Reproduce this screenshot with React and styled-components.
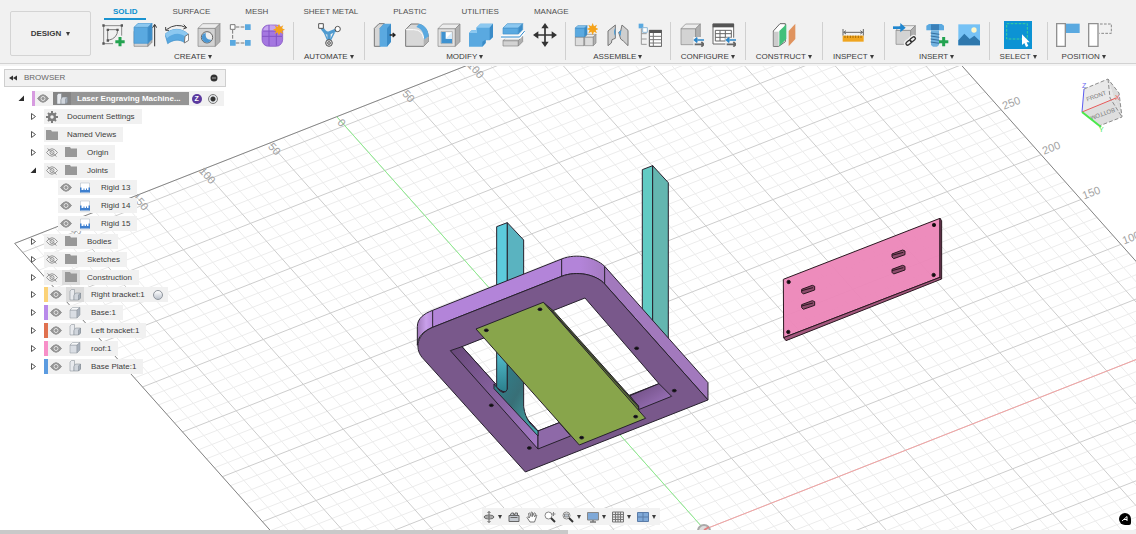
import React, { useState } from "react";
import styled, { createGlobalStyle } from "styled-components";

const GlobalStyle = createGlobalStyle`
    * {
        box-sizing: border-box;
    }
    body {
        margin: 0;
        font-family: "Liberation Sans", Arial, sans-serif;
        font-size: 8px;
        line-height: 10px;
        color: #3c3c3c;
        background: #fff;
    }
    button {
        margin: 0;
        padding: 0;
        border: 0;
        background: none;
        font: inherit;
        color: inherit;
        cursor: pointer;
    }
    ul {
        margin: 0;
        padding: 0;
        list-style: none;
    }
    svg {
        display: block;
        flex: none;
    }
`;

//SECTION STYLED-COMPONENTS

const Page = styled.div`
    height: 100vh;
    display: flex;
    flex-direction: column;
    overflow: hidden;
`;

const Header = styled.header`
    display: flex;
    height: 66px;
    flex: none;
    padding-left: 10px;
    background: #f1f1f1;
    border-bottom: 2px solid #f4f4f4;
    box-shadow: inset 0 -1px 0 #d2d2d2;
`;

const DesignButton = styled.button`
    display: flex;
    align-items: center;
    justify-content: center;
    gap: 5px;
    width: 81px;
    height: 45px;
    margin: 11px 2px 0 0;
    border: 1px solid #d4d4d4;
    border-radius: 2px;
    font-weight: bold;
`;

const Caret = styled.span`
    border-left: 2px solid transparent;
    border-right: 2px solid transparent;
    border-top: 4px solid #3c3c3c;
`;

const Ribbon = styled.div`
    flex: 1;
`;

const Tabs = styled.nav`
    display: flex;
    gap: 17px;
    padding: 7px 0 0 11px;
    height: 20px;
`;

const Tab = styled.button`
    padding: 0 9px;
    height: 13px;
    line-height: 10px;
    display: flex;
    color: ${(props) => (props.$active ? "#0a8fd0" : "#505050")};
    font-weight: ${(props) => (props.$active ? "bold" : "normal")};
    border-bottom: 2px solid ${(props) => (props.$active ? "#1a93d0" : "transparent")};
`;

const Groups = styled.div`
    display: flex;
    padding-top: 2px;
`;

const Group = styled.section`
    display: flex;
    flex-direction: column;
    align-items: center;
    height: 38px;
    border-right: 1px solid #d0d0d0;
    &:last-child {
        border-right: 0;
    }
`;

const Tools = styled.div`
    display: flex;
    flex: none;
    align-items: center;
    gap: 8px;
    padding: 0 8px;
    height: 26px;
`;

const Tool = styled.button`
    display: flex;
    align-items: center;
    justify-content: center;
    width: ${(props) => (props.$active ? 28 : 24)}px;
    height: ${(props) => (props.$active ? 28 : 24)}px;
    background: ${(props) => (props.$active ? "#0c93d4" : "none")};
`;

const GroupLabel = styled.button`
    display: flex;
    align-items: center;
    gap: 2px;
    padding: 4px 10px 0;
    white-space: nowrap;
`;

const Viewport = styled.main`
    position: relative;
    flex: 1;
    min-height: 0;
    overflow: hidden;
    background: #fff;
`;

const Canvas = styled.svg`
    width: 100%;
    height: 100%;
`;

const Browser = styled.aside`
    position: absolute;
    top: 3px;
    left: 4px;
    width: 222px;
`;

const BrowserHead = styled.div`
    display: flex;
    align-items: center;
    gap: 7px;
    height: 18px;
    padding: 0 7px 0 4px;
    background: #f1f1f1;
    border: 1px solid #cfcfcf;
    color: #666;
`;

const BrowserTitle = styled.h2`
    flex: 1;
    margin: 0;
    font-size: 8px;
    font-weight: normal;
`;

const Tree = styled.ul`
    display: grid;
    grid-auto-rows: 1fr;
    height: 288px;
    padding-top: 3px;
`;

const TreeRow = styled.li`
    display: flex;
    align-items: center;
    padding-left: ${(props) => props.$indent}px;
`;

const Toggle = styled.button`
    display: flex;
    justify-content: center;
    width: 8px;
    margin-right: 7px;
`;

const Chip = styled.div`
    display: flex;
    align-items: center;
    height: 15px;
    background: #f1f1f1;
`;

const ColorBar = styled.span`
    width: ${(props) => props.$width}px;
    height: 15px;
    background: ${(props) => props.$color};
`;

const EyeSlot = styled.span`
    display: flex;
    justify-content: center;
    width: 16px;
    margin-right: ${(props) => (props.$last ? 0 : 2)}px;
`;

const IconSlot = styled.span`
    display: flex;
    align-items: center;
    justify-content: center;
    width: 18px;
    height: ${(props) => (props.$root ? 13 : 15)}px;
    background: ${(props) => (props.$root ? "#858585" : props.$shaded ? "#dcdcdc" : "none")};
`;

const NodeName = styled.span`
    padding: 0 7px;
    white-space: nowrap;
    line-height: 13px;
    ${(props) =>
        props.$root &&
        "background: #959595; color: #fff; font-weight: bold; margin-right: 3px; padding: 0 8px 0 6px;"}
`;

const Badge = styled.span`
    display: flex;
    align-items: center;
    justify-content: center;
    width: 10px;
    height: 10px;
    margin-right: 6px;
    border-radius: 50%;
    background: #5b3a9e;
    color: #fff;
    font-size: 7px;
    font-weight: bold;
`;

const Activate = styled.input`
    appearance: none;
    width: 10px;
    height: 10px;
    margin: 0 6px 0 0;
    border: 1px solid #7c7c7c;
    border-radius: 50%;
    background: radial-gradient(circle, #333 0 2px, #e4e7ea 3px);
`;

const Ball = styled.span`
    width: 10px;
    height: 10px;
    margin: 0 5px 0 1px;
    border: 1px solid #8e949c;
    border-radius: 50%;
    background: linear-gradient(#fff, #bcc3cd);
`;

const NavDock = styled.div`
    position: absolute;
    left: 6px;
    right: 0;
    bottom: 5px;
    display: flex;
    justify-content: center;
    pointer-events: none;
`;

const NavBar = styled.div`
    display: flex;
    align-items: center;
    gap: 6px;
    height: 17px;
    padding: 0 4px 0 1px;
    background: #f2f2f2;
    pointer-events: auto;
`;

const NavButton = styled.button`
    display: flex;
    align-items: center;
    gap: 3px;
`;

const AssistButton = styled.button`
    position: absolute;
    right: 5px;
    bottom: 5px;
    width: 12px;
    height: 12px;
    border-radius: 6px 6px 2px 6px;
    background: #000;
`;

const ScrollTrack = styled.div`
    flex: none;
    height: 4px;
    background: #f1f1f1;
`;

const ScrollThumb = styled.div`
    width: 50%;
    height: 4px;
    background: #c9c9c9;
`;

//!SECTION

//SECTION TOOL ICONS (72 x 72 grid)

const EDGE = "#858585";
const GREY = "#d3d3d3";
const BLUE = "#5aa9e0";
const SKY = "#8cc8f0";

const Star = ({ x, y }) => (
    <path
        transform={`translate(${x} ${y})`}
        d="M0-18 4-8 13-13 9-4 18 0 9 4 13 13 4 8 0 18-4 8-13 13-9 4-18 0-9-4-13-13-4-8Z"
        fill="#f5a31a"
    />
);

const Plus = ({ x, y }) => (
    <path d={`M${x - 14} ${y}h28M${x} ${y - 14}v28`} stroke="#23a350" strokeWidth="9" />
);

const Swap = () => (
    <g strokeWidth="5" fill="none">
        <path d="M72 51H44m8-7-8 7 8 7" stroke="#2b86c9" />
        <path d="M44 64h28m-8-7 8 7-8 7" stroke="#666" />
    </g>
);

const Box = ({ x, y, w, h, d, front = GREY, top = "#ececec", side = "#b0b0b0", edge = EDGE }) => (
    <g stroke={edge} strokeWidth="2" strokeLinejoin="round">
        <path d={`M${x} ${y + d}h${w}v${h}h${-w}z`} fill={front} />
        <path d={`M${x} ${y + d}l${d} ${-d}h${w}l${-d} ${d}z`} fill={top} />
        <path d={`M${x + w} ${y + d}l${d} ${-d}v${h}l${-d} ${d}z`} fill={side} />
    </g>
);

const icons = {
    sketch: (
        <>
            <path d="M8 8h54v30M8 8v54h28" fill="none" stroke="#8a8a8a" strokeWidth="3" />
            <path d="M20 52V22M20 20h30Q50 46 22 52" fill="none" stroke="#7a7a7a" strokeWidth="3" />
            <path d="M4 4h7v7H4zM59 4h7v7h-7zM4 58h7v7H4zM17 17h7v7h-7zM46 17h7v7h-7zM17 49h7v7h-7z" fill="#555" />
            <Plus x={57} y={56} />
        </>
    ),
    extrude: (
        <>
            <Box x={3} y={14} w={42} h={44} d={12} />
            <Box x={3} y={1} w={42} h={48} d={12} front={BLUE} top={SKY} side="#3b8cc8" edge="#4795cd" />
            <path d="M65 70V6m-6 8 6-10 6 10" fill="none" stroke="#333" strokeWidth="3" />
        </>
    ),
    revolve: (
        <>
            <path d="M0 34C18 16 48 12 70 34L58 58C42 48 24 50 8 62Z" fill={BLUE} stroke="#3f8fc9" strokeWidth="2" />
            <path d="M0 34C18 16 48 12 70 34L60 40C44 28 22 30 6 46Z" fill={SKY} />
            <path d="M60 40 71 33V52L58 60Z" fill="#fff" stroke="#777" strokeWidth="3" />
            <path d="M4 20Q34-2 64 14M2 12v10h10M56 5l9 9-10 4" fill="none" stroke="#444" strokeWidth="3" />
        </>
    ),
    hole: (
        <>
            <Box x={3} y={2} w={52} h={54} d={14} />
            <circle cx="30" cy="43" r="17" fill="#eee" stroke="#666" strokeWidth="3" />
            <path d="M18 34a15 15 0 1 0 25 16Q24 52 26 29Z" fill="#4c97d2" />
        </>
    ),
    pattern: (
        <>
            <path d="M20 12h28M11 21v30M20 60h28" stroke="#777" strokeWidth="3" strokeDasharray="11 4" />
            <path d="M4 5h14v14H4z" fill="#fff" stroke="#777" strokeWidth="3" />
            <path d="M48 4h17v17H48zM3 51h17v17H3zM48 51h17v17H48z" fill={BLUE} />
        </>
    ),
    form: (
        <>
            <rect x="3" y="6" width="62" height="64" rx="20" fill="#a477e0" stroke="#7e4fc0" strokeWidth="2" />
            <path d="M6 24Q10 8 28 7L52 8 44 24Z" fill="#c6a6f0" />
            <path d="M3 40h60M24 6v63M46 20v48M6 24h40l16-8" fill="none" stroke="#8253c5" strokeWidth="3" />
            <Star x={54} y={20} />
        </>
    ),
    automate: (
        <>
            <path d="M13 12Q26 34 36 30T60 20M36 28v28" fill="none" stroke="#4f9bd0" strokeWidth="10" />
            <path d="M20 24 34 56M52 28 38 56" stroke="#4f9bd0" strokeWidth="4" />
            <path d="M5 2h14v14H5z" fill="#fff" stroke="#555" strokeWidth="3" />
            <circle cx="62" cy="18" r="8" fill="#fff" stroke="#555" strokeWidth="3" />
            <circle cx="36" cy="60" r="10" fill="#ddd" stroke="#555" strokeWidth="3" />
            <circle cx="36" cy="60" r="4" fill="#fff" stroke="#555" strokeWidth="3" />
        </>
    ),
    press: (
        <>
            <path d="M4 16 18 2H34L22 16V70H4Z" fill="#d6d6d6" stroke="#777" strokeWidth="3" />
            <path d="M20 16 32 2H54V56L42 71H20Z" fill={BLUE} />
            <path d="M42 16 54 2V56L42 71Z" fill="#3b8cc8" />
            <path d="M50 36h16m-7-6 7 6-7 6" fill="none" stroke="#222" strokeWidth="4" />
        </>
    ),
    fillet: (
        <>
            <path d="M2 70V20L18 3H40C62 8 71 26 71 54L56 70Z" fill="#d8d8d8" stroke="#777" strokeWidth="3" />
            <path d="M56 70V50L71 40V54Z" fill="#b2b2b2" />
            <path d="M34 12 42 2C62 6 71 24 71 40L57 50C57 30 50 17 34 12Z" fill={BLUE} />
            <path d="M3 20H26Q52 20 56 46" fill="none" stroke="#fff" strokeWidth="3" />
        </>
    ),
    shell: (
        <>
            <Box x={3} y={3} w={52} h={53} d={14} front="#e2e2e2" />
            <path d="M12 26h34v36H12z" fill="#fff" stroke="#999" strokeWidth="2" />
            <path d="M13 27h13v20h19v14H13z" fill="#3f92d0" />
            <path d="M26 47h19V28z" fill="#d9edfb" />
        </>
    ),
    combine: (
        <>
            <path d="M0 30 8 22H22V14L34 2H72V42L62 52H50V60L40 71H0Z" fill={BLUE} />
            <path d="M0 30 8 22H22V14L34 2H72L62 14H24V30Z" fill={SKY} />
            <path d="M62 14 72 2V42L62 52ZM40 56 50 50V60L40 71Z" fill="#3b8cc8" />
        </>
    ),
    split: (
        <>
            <Box x={6} y={2} w={46} h={18} d={13} front={BLUE} top={SKY} side="#3b8cc8" edge="#4795cd" />
            <Box x={6} y={40} w={46} h={16} d={13} top="#d8d8d8" />
            <path d="M0 42H56L71 24" fill="none" stroke="#fff" strokeWidth="10" />
            <path d="M0 42H56L71 24" fill="none" stroke="#2b86c9" strokeWidth="3" />
        </>
    ),
    move: (
        <>
            <path d="M36 10V62M10 36H62" stroke="#333" strokeWidth="5" />
            <path d="M36 0 47 16H25ZM36 72 47 56H25ZM0 36 16 25V47ZM72 36 56 25V47Z" fill="#333" />
        </>
    ),
    component: (
        <>
            <Box x={4} y={34} w={26} h={26} d={8} front="#ddd" />
            <Box x={32} y={34} w={26} h={26} d={8} front="#ddd" />
            <Box x={4} y={8} w={28} h={26} d={7} front={BLUE} top={SKY} side="#3b8cc8" edge="#3f8fc9" />
            <Star x={56} y={18} />
        </>
    ),
    joint: (
        <>
            <path d="M6 24 28 6V46L18 50 16 60 6 68Z" fill="#cfcfcf" stroke="#777" strokeWidth="3" />
            <path d="M66 22 48 6 44 24 38 28 44 48 52 54 66 68Z" fill="#cfcfcf" stroke="#777" strokeWidth="3" />
            <path d="M28 14Q20 28 28 40ZM46 20 38 28 44 40Z" fill="#4c9dd6" />
        </>
    ),
    bom: (
        <>
            <path d="M2 2h14v14H2z" fill={BLUE} />
            <path d="M10 16v48h16M10 32h16M10 48h16" fill="none" stroke="#999" strokeWidth="3" />
            <path d="M14 14h14v14H14z" fill="#fff" stroke="#8fb8d6" strokeWidth="3" />
            <path d="M34 22h37v48H34z" fill="#fff" stroke="#555" strokeWidth="3" />
            <path d="M34 21h37v9H34z" fill="#555" />
            <path d="M34 40h37M34 50h37M34 60h37M46 30v40" stroke="#777" strokeWidth="3" />
        </>
    ),
    configBox: (
        <>
            <Box x={3} y={3} w={44} h={48} d={14} />
            <path d="M40 42h32v30H40z" fill="#f1f1f1" />
            <Swap />
        </>
    ),
    configTable: (
        <>
            <path d="M3 3h62v60H3z" fill="#fff" stroke="#666" strokeWidth="3" />
            <path d="M2 2h64v11H2z" fill="#555" />
            <path d="M10 22h48v32H10zM10 32h48M10 43h48M24 22v32M40 22v32" fill="none" stroke="#666" strokeWidth="3" />
            <path d="M40 44h32v28H40z" fill="#f1f1f1" />
            <Swap />
        </>
    ),
    construct: (
        <>
            <path d="M4 24 24 2H40V56L20 70H4Z" fill="#fff" stroke="#666" strokeWidth="3" />
            <path d="M5 26H20V69H5Z" fill="#ccc" />
            <path d="M22 24 43 4V48L22 70Z" fill="#43c07a" />
            <path d="M50 24 70 2V48L50 70Z" fill="#e0935e" />
        </>
    ),
    measure: (
        <>
            <path d="M6 18V38M67 18V38M8 28H65M15 23 8 28 15 33M58 23 65 28 58 33" fill="none" stroke="#666" strokeWidth="3" />
            <path d="M5 38H68V56H5Z" fill="#f0a51f" />
            <path d="M12 38v7M20 38v7M28 38v7M36 38v7M44 38v7M52 38v7M60 38v7" stroke="#a96d06" strokeWidth="3" />
        </>
    ),
    derive: (
        <>
            <Box x={9} y={8} w={44} h={42} d={14} />
            <path d="M0 14H28" stroke="#1f86cf" strokeWidth="8" />
            <path d="M22 0 38 14 22 28Z" fill="#1f86cf" />
            <g fill="none" stroke="#f1f1f1" strokeWidth="12">
                <rect x="38" y="54" width="18" height="10" rx="5" transform="rotate(-38 47 59)" />
                <rect x="50" y="44" width="18" height="10" rx="5" transform="rotate(-38 59 49)" />
            </g>
            <g fill="none" stroke="#333" strokeWidth="4">
                <rect x="38" y="54" width="18" height="10" rx="5" transform="rotate(-38 47 59)" />
                <rect x="50" y="44" width="18" height="10" rx="5" transform="rotate(-38 59 49)" />
            </g>
        </>
    ),
    fastener: (
        <>
            <path d="M4 8 12 3H50L57 8V22H4Z" fill={BLUE} />
            <path d="M18 4h24v17H18z" fill="#3b80b8" />
            <path d="M18 22H42V66L36 71H24L18 66Z" fill="#72b2df" />
            <path d="M17 30l26 4M17 39l26 4M17 48l26 4M17 57l26 4" stroke="#356f9f" strokeWidth="3" />
            <Plus x={56} y={56} />
        </>
    ),
    image: (
        <>
            <path d="M4 4H69V67H4Z" fill="#76c2f5" />
            <path d="M4 52 22 32 38 48 52 38 69 54V67H4Z" fill="#2f78ad" />
            <circle cx="51" cy="21" r="8" fill="#fff6c8" />
        </>
    ),
    select: (
        <>
            <path d="M2 2H64V48H2Z" fill="none" stroke="#39d09b" strokeWidth="3" strokeDasharray="8 4" />
            <path d="M48 34V66L55 60 60 72 67 69 62 58H71Z" fill="#fff" />
        </>
    ),
    capture: (
        <>
            <path d="M30 2H71V30H30Z" fill={BLUE} />
            <path d="M2 2H28V70H2Z" fill="#fff" stroke="#909090" strokeWidth="4" />
        </>
    ),
    revert: (
        <>
            <path d="M36 3H70V31H34" fill="none" stroke="#888" strokeWidth="3" strokeDasharray="8 4" />
            <path d="M2 2H30V70H2Z" fill="#fff" stroke="#909090" strokeWidth="4" />
        </>
    )
};

const ToolIcon = ({ name }) => (
    <svg width="24" height="24" viewBox="0 0 72 72" aria-hidden="true">
        {icons[name]}
    </svg>
);

//!SECTION

//SECTION BROWSER ICONS

const Eye = ({ off }) => (
    <svg width="12" height="9" viewBox="0 0 24 18" aria-hidden="true">
        <path
            d="M1 9Q12-6 23 9 12 24 1 9Z"
            fill={off ? "none" : "#959595"}
            stroke="#959595"
            strokeWidth="2"
        />
        <circle cx="12" cy="9" r="4" fill={off ? "none" : "#959595"} stroke={off ? "#959595" : "#e4e4e4"} strokeWidth="2" />
        {off && <path d="M3 1 21 17" stroke="#959595" strokeWidth="2" />}
    </svg>
);

const nodeIcons = {
    folder: <path d="M0 2h10l2 3h12v17H0z" fill="#989898" />,
    gear: (
        <>
            <circle cx="12" cy="12" r="6" fill="none" stroke="#7d7d7d" strokeWidth="5" />
            <path d="M12 0v5M12 19v5M0 12h5M19 12h5M4 4l3 3M17 17l3 3M4 20l3-3M17 7l3-3" stroke="#7d7d7d" strokeWidth="4" />
        </>
    ),
    joint: (
        <>
            <path d="M3 2h18v20H3z" fill="#fff" stroke="#a9b4c0" />
            <path d="M2 21V11h3v5h4v-3h2v3h3v-3h2v3h3v-5h3v10z" fill="#3f80cf" />
        </>
    ),
    body: (
        <g stroke="#8d949d" strokeLinejoin="round">
            <path d="M2 6h14v16H2z" fill="#dadee4" />
            <path d="M2 6l5-5h15l-6 5z" fill="#f8f9fa" />
            <path d="M16 6l6-5v15l-6 6z" fill="#a9b1bc" />
        </g>
    ),
    assembly: (
        <g stroke="#7d848d" strokeLinejoin="round">
            <path d="M2 4l3-3h6v12h-1v9H2z" fill="#e8eaee" />
            <path d="M10 12l3-4h10v10l-4 4h-9z" fill="#d0d5dc" />
            <path d="M19 12l4-4v10l-4 4z" fill="#a4adb9" />
        </g>
    )
};

const NodeIcon = ({ name }) => (
    <svg width="12" height="12" viewBox="0 0 24 24" aria-hidden="true">
        {nodeIcons[name]}
    </svg>
);

const Arrow = ({ open }) => (
    <svg width="7" height="9" viewBox="0 0 14 18" aria-hidden="true">
        {open ? (
            <path d="M12 3V14H1Z" fill="#2c2c2c" />
        ) : (
            <path d="M3 3 11 9 3 15Z" fill="#fff" stroke="#555" strokeWidth="2" />
        )}
    </svg>
);

//!SECTION

const groups = [
    { label: "CREATE", tools: ["sketch", "extrude", "revolve", "hole", "pattern", "form"] },
    { label: "AUTOMATE", tools: ["automate"] },
    { label: "MODIFY", tools: ["press", "fillet", "shell", "combine", "split", "move"] },
    { label: "ASSEMBLE", tools: ["component", "joint", "bom"] },
    { label: "CONFIGURE", tools: ["configBox", "configTable"] },
    { label: "CONSTRUCT", tools: ["construct"] },
    { label: "INSPECT", tools: ["measure"] },
    { label: "INSERT", tools: ["derive", "fastener", "image"] },
    { label: "SELECT", tools: ["select"] },
    { label: "POSITION", tools: ["capture", "revert"] }
];

const tabs = ["SOLID", "SURFACE", "MESH", "SHEET METAL", "PLASTIC", "UTILITIES", "MANAGE"];

const nodes = [
    { name: "Laser Engraving Machine...", root: true, open: true, color: "#d79be0", eye: "on", icon: "assembly" },
    { name: "Document Settings", small: "gear" },
    { name: "Named Views", small: "folder" },
    { name: "Origin", eye: "off", icon: "folder" },
    { name: "Joints", eye: "off", icon: "folder", open: true },
    { name: "Rigid 13", eye: "on", icon: "joint", leaf: true },
    { name: "Rigid 14", eye: "on", icon: "joint", leaf: true },
    { name: "Rigid 15", eye: "on", icon: "joint", leaf: true },
    { name: "Bodies", eye: "off", icon: "folder" },
    { name: "Sketches", eye: "off", icon: "folder" },
    { name: "Construction", eye: "off", icon: "folder", shaded: true },
    { name: "Right bracket:1", color: "#fbd277", eye: "on", icon: "assembly", shaded: true, ball: true },
    { name: "Base:1", color: "#b98aea", eye: "on", icon: "body" },
    { name: "Left bracket:1", color: "#e0714f", eye: "on", icon: "assembly" },
    { name: "roof:1", color: "#f78fc8", eye: "on", icon: "body" },
    { name: "Base Plate:1", color: "#5b9be0", eye: "on", icon: "assembly" }
];

const TreeNode = ({ node }) => (
    <TreeRow $indent={node.root ? 13 : node.leaf ? 54 : 25}>
        {!node.leaf && (
            <Toggle aria-label={`Toggle ${node.name}`}>
                <Arrow open={node.open} />
            </Toggle>
        )}
        <Chip>
            {node.color && <ColorBar $color={node.color} $width={node.root ? 3 : 4} />}
            {node.eye && (
                <EyeSlot>
                    <Eye off={node.eye === "off"} />
                </EyeSlot>
            )}
            {node.small && (
                <EyeSlot $last>
                    <NodeIcon name={node.small} />
                </EyeSlot>
            )}
            {node.icon && (
                <IconSlot $root={node.root} $shaded={node.shaded}>
                    <NodeIcon name={node.icon} />
                </IconSlot>
            )}
            <NodeName $root={node.root}>{node.name}</NodeName>
            {node.root && (
                <>
                    <Badge>Z</Badge>
                    <Activate type="radio" name="active" defaultChecked aria-label="Activate component" />
                </>
            )}
            {node.ball && <Ball />}
        </Chip>
    </TreeRow>
);

//SECTION SCENE

// Ground plane: origin and the two 50 mm steps, in canvas pixels
const O = [704.3, 463.5];
const U = [67.1, -26.4];
const V = [39.95, 44.87];
const at = (u, v) => [O[0] + u * U[0] + v * V[0], O[1] + u * U[1] + v * V[1]];
const line = (a, b) => `M${a[0].toFixed(1)} ${a[1].toFixed(1)}L${b[0].toFixed(1)} ${b[1].toFixed(1)}`;

const MIN_U = -4.8;
const MAX_U = 7.4;
const MIN_V = -9.2;
const MAX_V = 5;

let minor = "";
let major = "";
for (let i = -24; i <= 37; i++) {
    const seg = line(at(i / 5, MIN_V), at(i / 5, MAX_V));
    if (i % 5 === 0) major += seg;
    else minor += seg;
}
for (let j = -46; j <= 25; j++) {
    const seg = line(at(MIN_U, j / 5), at(MAX_U, j / 5));
    if (j % 5 === 0) major += seg;
    else minor += seg;
}

const topLabels = [
    [-4, "200"],
    [-3, "150"],
    [-2, "100"],
    [-1, "50"],
    [0, "0"],
    [1, "50"],
    [2, "100"]
];
const sideLabels = [
    [-5, "250"],
    [-4, "200"],
    [-3, "150"],
    [-2, "100"]
];

const Ground = () => (
    <g fill="none">
        <path d={minor} stroke="#ececec" />
        <path d={major} stroke="#cdcdcd" />
        <path d={line(at(MIN_U, MAX_V), at(MIN_U, MIN_V)) + line(at(MIN_U, MIN_V), at(MAX_U, MIN_V)) + line(at(MAX_U, MIN_V), at(MAX_U, MAX_V))} stroke="#858585" />
        <path d={line(at(0, 0), at(0, MIN_V))} stroke="#8df08d" />
        <path d={line(at(0, 0), at(MAX_U, 0))} stroke="#f5a3a3" />
        <g fill="#a2a2a2" fontSize="11">
            {topLabels.map(([u, text]) => {
                const [x, y] = at(u, -9.1);
                return (
                    <text key={u} textAnchor="middle" transform={`translate(${x - 2} ${y + 4}) rotate(48)`}>
                        {text}
                    </text>
                );
            })}
            {sideLabels.map(([v, text]) => {
                const [x, y] = at(MAX_U, v);
                return (
                    <text key={v} transform={`translate(${x + 3} ${y}) rotate(-21)`}>
                        {text}
                    </text>
                );
            })}
        </g>
        <circle cx="704" cy="465" r="6" fill="#ddd" stroke="#aaa" strokeWidth="2" />
        <path d="M704 464 709 461" stroke="#e08080" strokeWidth="2" />
    </g>
);

const Machine = () => (
    <g transform="translate(400 84) scale(.3333)" stroke="#26202c" strokeWidth="3" strokeLinejoin="round">
        <defs>
            <linearGradient id="post" x1="0" y1="0" x2="0" y2="1">
                <stop offset="0" stopColor="#5ccbdc" />
                <stop offset="1" stopColor="#2b7f8c" />
            </linearGradient>
            <linearGradient id="bracket" x1="0" y1="0" x2="1" y2="1">
                <stop offset="0" stopColor="#2e8794" />
                <stop offset=".5" stopColor="#386f77" />
                <stop offset="1" stopColor="#45b2b4" />
            </linearGradient>
            <linearGradient id="rim" x1="0" y1="0" x2="1" y2="0">
                <stop offset="0" stopColor="#a27abc" />
                <stop offset=".03" stopColor="#c9a0ea" />
                <stop offset=".06" stopColor="#b384d9" />
                <stop offset=".56" stopColor="#b384d9" />
                <stop offset=".66" stopColor="#a279bd" />
                <stop offset="1" stopColor="#a279bd" />
            </linearGradient>
            <linearGradient id="wall" x1="0" y1="0" x2="1" y2="1">
                <stop offset="0" stopColor="#684879" />
                <stop offset="1" stopColor="#a57bc6" />
            </linearGradient>
        </defs>
        <path d="M290 230 322 218V440H290Z" fill="#5ccbdc" />
        <path d="M322 218 371 270V430H322Z" fill="#5ab3c0" />
        <path d="M727 59 758 47V520H727Z" fill="#62cbc4" />
        <path d="M758 47 805 98V575H758Z" fill="#64b6b0" />
        <path
            d="M52 586V530C52 505 72 491 98 481L485 327C530 309 585 321 614 349L924 698V750L614 402C590 374 530 361 485 379L98 532C72 542 52 560 52 586Z"
            fill="url(#rim)"
        />
        <path
            fillRule="evenodd"
            d="M98 532 485 379C530 361 590 374 614 402L924 750 376 966 66 622C44 595 50 552 98 532ZM186 590 555 444 777 701 414 843Z"
            fill="#79588b"
        />
        <path d="M98 481V532M485 327V379M614 349V402" />
        <path d="M151 602 186 590 414 843V897Z" fill="url(#wall)" />
        <path d="M414 843 478 818 512 858 414 897Z" fill="#8e69a8" />
        <path d="M690 737 777 701 815 739 718 778Z" fill="url(#wall)" />
        <path d="M290 580 322 600V722Q312 732 290 712Z" fill="url(#post)" />
        <path d="M322 620 371 680V770C376 810 396 828 414 843V858L282 716V702L290 712Q312 740 322 718Z" fill="url(#bracket)" />
        <path d="M430 457 462 484 716 768V784Z" fill="#607a36" />
        <path d="M454 481 716 772" fill="none" />
        <path d="M228 537 430 457 737 805 538 885Z" fill="#88a54b" />
        <g fill="#0d0d0d">
            {[[259, 541], [420, 478], [707, 800], [545, 863], [710, 595], [823, 722], [274, 766], [388, 894]].map(([x, y]) => (
                <ellipse key={x} cx={x} cy={y} rx="6" ry="4" />
            ))}
        </g>
    </g>
);

const Roof = () => (
    <g transform="translate(740 94) scale(.3333)" stroke="#2a1820" strokeWidth="3" strokeLinejoin="round">
        <path d="M130 358 600 175V352L131 533Z" fill="#ec86b8" fillOpacity=".95" />
        <path d="M600 175 605 182V357L600 352Z" fill="#8a4769" />
        <path d="M131 533 600 352 605 357 138 542Z" fill="#a3577d" />
        {[[204, 388], [204, 434], [475, 282], [475, 328]].map(([x, y]) => (
            <g key={`${x}-${y}`} transform={`translate(${x} ${y})`} fill="#8d4c6c">
                <path d="M-19 0 13-12 20-9V2L-14 14-19 9Z" />
                <path d="M-19 4 15-5" />
            </g>
        ))}
        <g fill="#0d0d0d">
            {[[146, 366], [582, 195], [581, 345], [145, 516]].map(([x, y]) => (
                <circle key={x} cx={x} cy={y} r="5" />
            ))}
        </g>
    </g>
);

const ViewCube = () => (
    <g transform="translate(0 -66)" fontSize="7">
        <path d="M1082 112 1084 89 1108 79 1114 98Z" fill="#e9e9e9" />
        <path d="M1108 79 1119 93 1122 117 1114 98Z" fill="#dcdcdc" />
        <path d="M1082 112 1114 98 1122 117 1099 126Z" fill="#dedede" />
        <path d="M1084 89 1108 79 1119 93 1122 117 1099 126M1108 79 1110 98 1122 117" fill="none" stroke="#8c8c8c" strokeDasharray="4 2" />
        <text fill="#7d7d7d" textAnchor="middle" transform="translate(1097 98) rotate(-20)" fontSize="6">
            FRONT
        </text>
        <text fill="#7d7d7d" textAnchor="middle" transform="translate(1102 112) rotate(160)" fontSize="6">
            BOTTOM
        </text>
        <path d="M1082 112 1084 89" stroke="#5c5cf0" />
        <path d="M1082 112 1116 98" stroke="#e85a5a" />
        <path d="M1082 112 1101 127" stroke="#4be84b" strokeWidth="2" />
        <text x="1082" y="88" fill="#6a6af0">Z</text>
        <text x="1115" y="100" fill="#e85a5a">X</text>
        <text x="1099" y="132" fill="#4be84b">Y</text>
    </g>
);

//!SECTION

const navTools = [
    {
        name: "Orbit",
        menu: true,
        art: (
            <g fill="none" stroke="#666" strokeWidth="2">
                <ellipse cx="12" cy="12" rx="10" ry="4" />
                <path d="M12 1v22M9 4l3-3 3 3M9 20l3 3 3-3M2 12h20" />
            </g>
        )
    },
    {
        name: "Look at",
        art: (
            <g fill="#c4c9d0" stroke="#666" strokeWidth="2">
                <path d="M2 9h20v12H2zM4 9l3-5h4v3h3V4h5v5" />
                <path d="M5 13h14" />
            </g>
        )
    },
    {
        name: "Pan",
        art: (
            <path
                d="M8 22 2 13q1-3 4 0l1 1L5 5q2-2 3 0l2 6V3q2-2 3 0v8l3-7q2-1 3 1l-2 7 3-4q3 0 1 3l-4 11Z"
                fill="#fff"
                stroke="#777"
                strokeWidth="2"
            />
        )
    },
    {
        name: "Zoom",
        art: (
            <g fill="#fff" stroke="#888" strokeWidth="2">
                <circle cx="9" cy="9" r="7" />
                <path d="M19 2v8M15 6h8" />
                <path d="M14 14l8 8" stroke="#333" strokeWidth="4" />
            </g>
        )
    },
    {
        name: "Fit",
        menu: true,
        art: (
            <g fill="#fff" stroke="#888" strokeWidth="2">
                <circle cx="9" cy="9" r="7" />
                <path d="M5 6h8v6H5z" fill="#bcc5cf" />
                <path d="M14 14l8 8" stroke="#333" strokeWidth="4" />
            </g>
        )
    },
    {
        name: "Display settings",
        menu: true,
        art: (
            <>
                <path d="M1 3h22v15H1z" fill="#7fa9d8" stroke="#888" strokeWidth="2" />
                <path d="M6 22h12M12 18v4" stroke="#777" strokeWidth="3" />
            </>
        )
    },
    {
        name: "Grid and snaps",
        menu: true,
        art: <path d="M1 2h22v20H1zM1 7h22M1 12h22M1 17h22M7 2v20M12 2v20M17 2v20" fill="#e6e6e6" stroke="#777" strokeWidth="2" />
    },
    {
        name: "Viewports",
        menu: true,
        art: <path d="M1 3h22v18H1zM12 3v18M1 12h22" fill="#7fa9d8" stroke="#5b7ca8" strokeWidth="2" />
    }
];

const App = () => {
    const [tab, setTab] = useState("SOLID");

    return (
        <Page>
            <GlobalStyle />
            <Header>
                <DesignButton>
                    DESIGN <Caret />
                </DesignButton>
                <Ribbon>
                    <Tabs>
                        {tabs.map((name) => (
                            <Tab key={name} $active={tab === name} onClick={() => setTab(name)}>
                                {name}
                            </Tab>
                        ))}
                    </Tabs>
                    <Groups>
                        {groups.map((group) => (
                            <Group key={group.label}>
                                <Tools>
                                    {group.tools.map((name) => (
                                        <Tool key={name} $active={name === "select"} aria-label={name}>
                                            <ToolIcon name={name} />
                                        </Tool>
                                    ))}
                                </Tools>
                                <GroupLabel>
                                    {group.label} <Caret />
                                </GroupLabel>
                            </Group>
                        ))}
                    </Groups>
                </Ribbon>
            </Header>

            <Viewport>
                <Canvas>
                    <Ground />
                    <Machine />
                    <Roof />
                    <ViewCube />
                </Canvas>

                <Browser>
                    <BrowserHead>
                        <svg width="8" height="6" viewBox="0 0 16 12" aria-hidden="true">
                            <path d="M8 1V11L0 6ZM16 1V11L8 6Z" fill="#333" />
                        </svg>
                        <BrowserTitle>BROWSER</BrowserTitle>
                        <svg width="8" height="8" viewBox="0 0 16 16" aria-hidden="true">
                            <circle cx="8" cy="8" r="7" fill="#333" />
                            <path d="M4 8h8" stroke="#aaa" strokeWidth="2" />
                        </svg>
                    </BrowserHead>
                    <Tree>
                        {nodes.map((node) => (
                            <TreeNode key={node.name} node={node} />
                        ))}
                    </Tree>
                </Browser>

                <NavDock>
                    <NavBar>
                        {navTools.map((tool) => (
                            <NavButton key={tool.name} aria-label={tool.name}>
                                <svg width="12" height="12" viewBox="0 0 24 24" aria-hidden="true">
                                    {tool.art}
                                </svg>
                                {tool.menu && <Caret />}
                            </NavButton>
                        ))}
                    </NavBar>
                </NavDock>

                <AssistButton aria-label="Assistant">
                    <svg width="12" height="12" viewBox="0 0 24 24" aria-hidden="true">
                        <path d="M6 16 16 7v9M10 13h6" fill="none" stroke="#fff" strokeWidth="2" />
                    </svg>
                </AssistButton>
            </Viewport>

            <ScrollTrack>
                <ScrollThumb />
            </ScrollTrack>
        </Page>
    );
};

export default App;
